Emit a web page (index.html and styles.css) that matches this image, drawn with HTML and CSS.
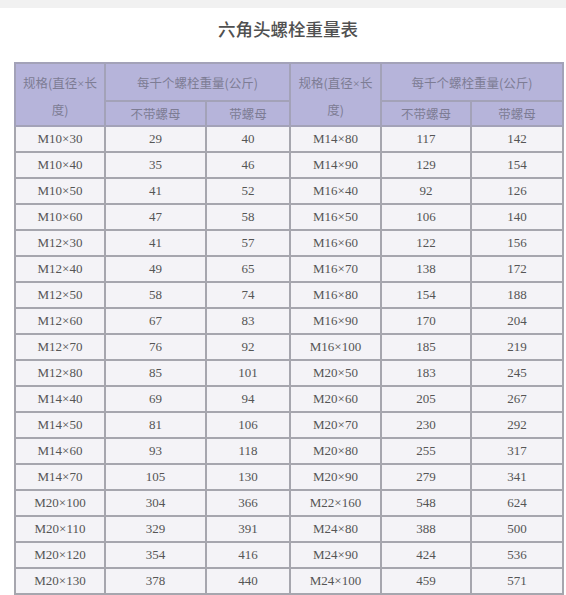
FILE: index.html
```html
<!DOCTYPE html>
<html lang="zh">
<head>
<meta charset="utf-8">
<title>六角头螺栓重量表</title>
<link rel="stylesheet" href="styles.css">
</head>
<body>
<div class="topbar"></div>
<div class="wrap">
  <h1 class="title">六角头螺栓重量表</h1>
  <table class="tbl">
    <colgroup>
      <col class="c1"><col class="c2"><col class="c3"><col class="c4"><col class="c5"><col class="c6">
    </colgroup>
    <thead>
      <tr class="h1">
        <th rowspan="2" class="spec">规格(直径<span class="x">×</span>长<br>度)</th>
        <th colspan="2">每千个螺栓重量(公斤)</th>
        <th rowspan="2" class="spec">规格(直径<span class="x">×</span>长<br>度)</th>
        <th colspan="2">每千个螺栓重量(公斤)</th>
      </tr>
      <tr class="h2">
        <th>不带螺母</th><th>带螺母</th>
        <th>不带螺母</th><th>带螺母</th>
      </tr>
    </thead>
    <tbody>
      <tr><td>M10×30</td><td>29</td><td>40</td><td>M14×80</td><td>117</td><td>142</td></tr>
      <tr><td>M10×40</td><td>35</td><td>46</td><td>M14×90</td><td>129</td><td>154</td></tr>
      <tr><td>M10×50</td><td>41</td><td>52</td><td>M16×40</td><td>92</td><td>126</td></tr>
      <tr><td>M10×60</td><td>47</td><td>58</td><td>M16×50</td><td>106</td><td>140</td></tr>
      <tr><td>M12×30</td><td>41</td><td>57</td><td>M16×60</td><td>122</td><td>156</td></tr>
      <tr><td>M12×40</td><td>49</td><td>65</td><td>M16×70</td><td>138</td><td>172</td></tr>
      <tr><td>M12×50</td><td>58</td><td>74</td><td>M16×80</td><td>154</td><td>188</td></tr>
      <tr><td>M12×60</td><td>67</td><td>83</td><td>M16×90</td><td>170</td><td>204</td></tr>
      <tr><td>M12×70</td><td>76</td><td>92</td><td>M16×100</td><td>185</td><td>219</td></tr>
      <tr><td>M12×80</td><td>85</td><td>101</td><td>M20×50</td><td>183</td><td>245</td></tr>
      <tr><td>M14×40</td><td>69</td><td>94</td><td>M20×60</td><td>205</td><td>267</td></tr>
      <tr><td>M14×50</td><td>81</td><td>106</td><td>M20×70</td><td>230</td><td>292</td></tr>
      <tr><td>M14×60</td><td>93</td><td>118</td><td>M20×80</td><td>255</td><td>317</td></tr>
      <tr><td>M14×70</td><td>105</td><td>130</td><td>M20×90</td><td>279</td><td>341</td></tr>
      <tr><td>M20×100</td><td>304</td><td>366</td><td>M22×160</td><td>548</td><td>624</td></tr>
      <tr><td>M20×110</td><td>329</td><td>391</td><td>M24×80</td><td>388</td><td>500</td></tr>
      <tr><td>M20×120</td><td>354</td><td>416</td><td>M24×90</td><td>424</td><td>536</td></tr>
      <tr><td>M20×130</td><td>378</td><td>440</td><td>M24×100</td><td>459</td><td>571</td></tr>
    </tbody>
  </table>
</div>
</body>
</html>
```

FILE: styles.css
```css
html, body {
  margin: 0;
  padding: 0;
  background: #ffffff;
}
.topbar {
  height: 8px;
  background: #f1f1f1;
}
.wrap {
  width: 548px;
  padding-left: 14px;
}
.title {
  margin: 8px 0 0 0;
  height: 46px;
  line-height: 26px;
  text-align: center;
  font-family: "Noto Sans CJK SC", sans-serif;
  font-size: 17.5px;
  font-weight: 500;
  color: #505050;
}
.tbl {
  width: 548px;
  table-layout: fixed;
  border-collapse: collapse;
  border: 2px solid #a4a4ae;
  font-family: "Liberation Serif", "Noto Sans CJK SC", serif;
}
.c1 { width: 90px; }
.c2 { width: 101px; }
.c3 { width: 84px; }
.c4 { width: 91px; }
.c5 { width: 90px; }
.c6 { width: 92px; }
.tbl th {
  background: #b6b4da;
  border: 2px solid #a3a2b8;
  font-family: "Noto Sans CJK SC", sans-serif;
  font-weight: 400;
  font-size: 12.5px;
  color: #7d7c94;
  padding: 0;
  text-align: center;
  vertical-align: middle;
}
.tbl .h1 th { height: 36px; }
.tbl .h2 th { height: 23px; }
.tbl th.spec {
  line-height: 25px;
  padding-top: 2px;
}
.tbl th .x {
  font-family: "Liberation Serif", serif;
}
.tbl td {
  background: #f4f3f7;
  border: 2px solid #a6a6ae;
  height: 24px;
  padding: 0;
  text-align: center;
  font-size: 13px;
  color: #555555;
}
```
